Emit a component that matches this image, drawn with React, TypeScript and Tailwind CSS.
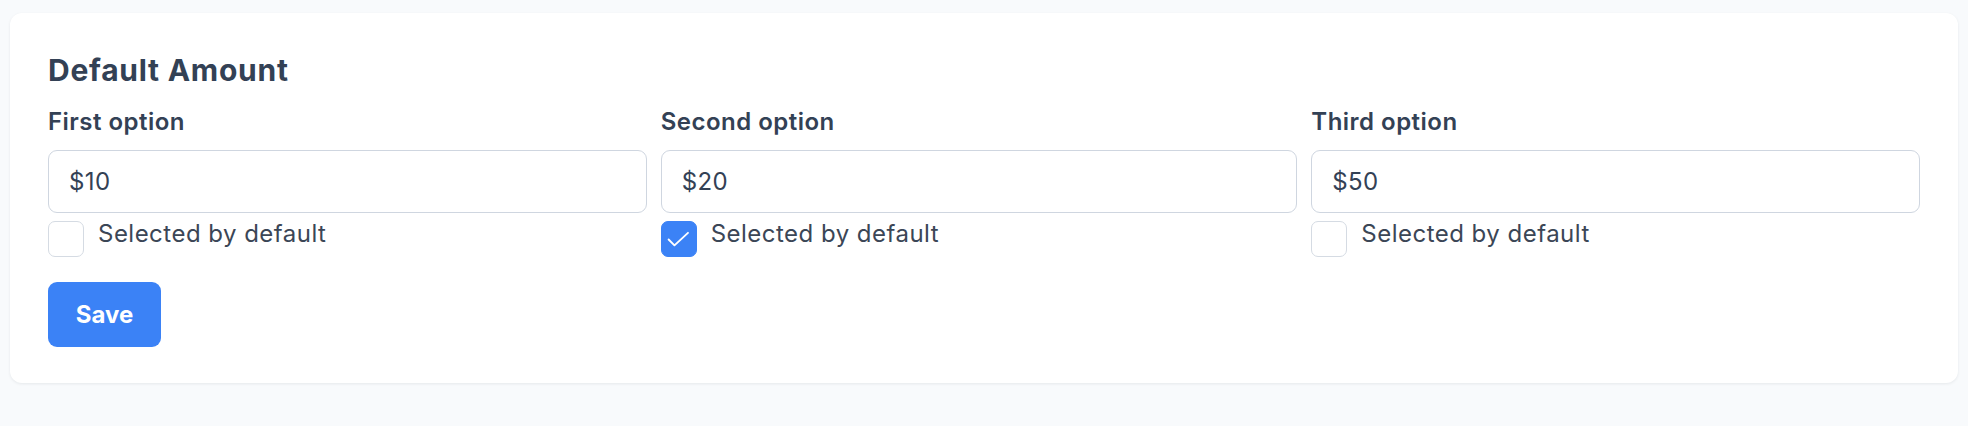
import { useState } from 'react';

type Option = { label: string; value: string; selected: boolean };

const initialOptions: Option[] = [
  { label: 'First option', value: '$10', selected: false },
  { label: 'Second option', value: '$20', selected: true },
  { label: 'Third option', value: '$50', selected: false },
];

function Checkbox({ checked, onChange }: { checked: boolean; onChange: () => void }) {
  return (
    <button
      type="button"
      onClick={onChange}
      className={
        checked
          ? 'w-9 h-9 shrink-0 rounded-[7px] bg-[#3b82f6] border border-[#3b82f6] flex items-center justify-center'
          : 'w-9 h-9 shrink-0 rounded-[7px] bg-white border border-[#d5dbe3]'
      }
    >
      {checked && (
        <svg width="36" height="36" viewBox="0 0 36 36" fill="none">
          <path d="M7 18.5L13.2 24.7L27.5 11.5" stroke="white" strokeWidth="2" strokeLinecap="round" strokeLinejoin="round" />
        </svg>
      )}
    </button>
  );
}

function App() {
  const [options, setOptions] = useState<Option[]>(initialOptions);

  const toggle = (i: number) => {
    setOptions((prev) => prev.map((o, idx) => (idx === i ? { ...o, selected: !o.selected } : o)));
  };

  return (
    <div className="min-h-screen bg-[#f8fafc] px-[10px] pt-[13px] font-['Inter',sans-serif] text-[#334155]">
      <div className="bg-white rounded-[12px] shadow-[0_1px_3px_rgba(15,23,42,0.08)] px-[38px] pt-[39px] pb-[36px]">
        <h2 className="text-[30px] leading-[36px] font-bold tracking-[0.025em] text-[#334155]">Default Amount</h2>

        {/* Options */}
        <div className="grid grid-cols-[599fr_637fr_609fr] gap-x-[14px] mt-[18px]">
          {options.map((o, i) => (
            <div key={o.label} className="flex flex-col">
              <label className="text-[24px] leading-[32px] font-semibold tracking-[0.02em] text-[#334155]">{o.label}</label>
              <input
                defaultValue={o.value}
                className="mt-[12px] h-[63px] w-full rounded-[9px] border border-[#cfd6e0] bg-white px-[20px] text-[24px] tracking-[0.015em] text-[#334155] outline-none"
              />
              <div className="mt-[8px] flex items-start gap-[14px]">
                <Checkbox checked={o.selected} onChange={() => toggle(i)} />
                <span className="-mt-[3px] text-[24px] leading-[32px] tracking-[0.02em] text-[#3b4656]">Selected by default</span>
              </div>
            </div>
          ))}
        </div>

        <button className="mt-[25px] h-[65px] w-[113px] rounded-[9px] bg-[#3b82f6] text-white text-[24px] font-bold">
          Save
        </button>
      </div>
    </div>
  );
}

export default App;
